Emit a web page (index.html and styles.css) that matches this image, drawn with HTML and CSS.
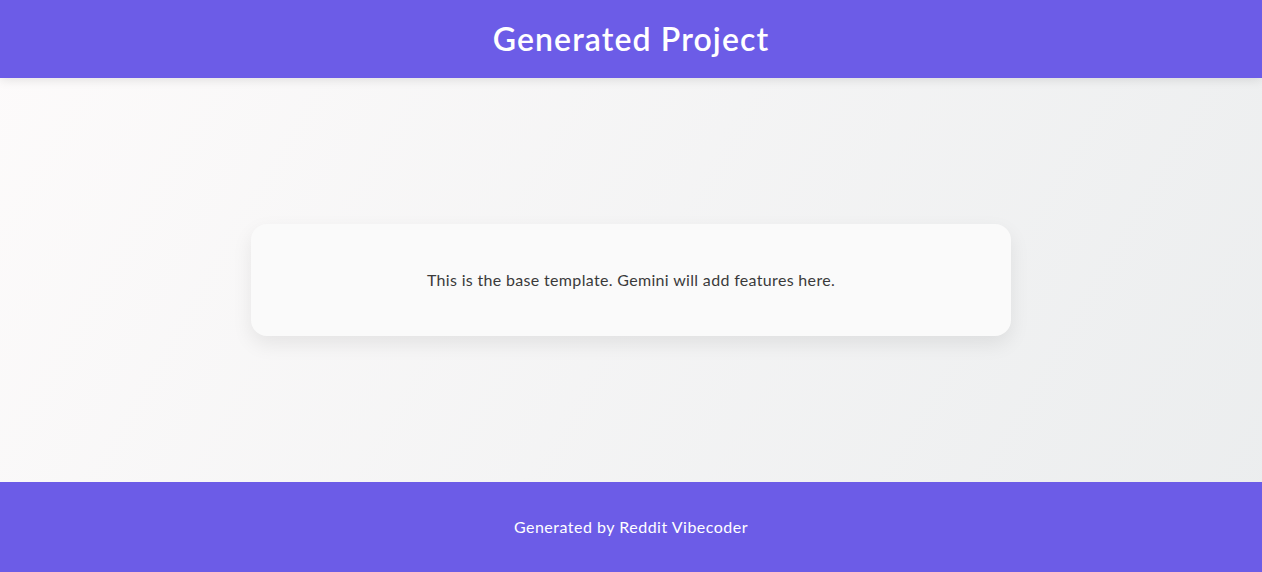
FILE: index.html
```html
<!DOCTYPE html>
<html lang="en">
<head>
<meta charset="utf-8">
<title>Generated Project</title>
<link rel="stylesheet" href="styles.css">
</head>
<body>
<header class="site-header">
  <h1 class="site-title">Generated Project</h1>
</header>
<main class="main">
  <section class="card">
    <p class="card-text">This is the base template. Gemini will add features here.</p>
  </section>
</main>
<footer class="site-footer">
  <p class="footer-text">Generated by Reddit Vibecoder</p>
</footer>
</body>
</html>
```

FILE: styles.css
```css
* { box-sizing: border-box; }
html, body { height: 100%; }
body {
  margin: 0;
  min-height: 100vh;
  display: flex;
  flex-direction: column;
  font-family: "Lato", "Noto Sans", sans-serif;
  color: #333;
  background: linear-gradient(120deg, #fdfbfb 0%, #ebedee 100%);
}
.site-header {
  height: 78px;
  background: #6c5ce7;
  color: #fff;
  display: flex;
  align-items: center;
  justify-content: center;
  box-shadow: 0 2px 10px rgba(0,0,0,0.1);
  position: relative;
  z-index: 1;
}
.site-title {
  margin: 0;
  font-size: 32px;
  font-weight: 600;
  letter-spacing: 1.1px;
  line-height: 1;
}
.main {
  flex: 1;
  display: flex;
  align-items: center;
  justify-content: center;
}
.card {
  width: 760px;
  height: 112px;
  background: #fafafa;
  border-radius: 16px;
  box-shadow: 0 8px 20px rgba(0,0,0,0.08);
  display: flex;
  align-items: center;
  justify-content: center;
}
.card-text {
  margin: 0 0 2px;
  font-size: 16px;
  letter-spacing: 0.33px;
  color: #3a3a3a;
}
.site-footer {
  height: 90px;
  background: #6c5ce7;
  color: #fff;
  display: flex;
  align-items: center;
  justify-content: center;
}
.footer-text {
  margin: 0 0 2px;
  font-size: 16px;
  letter-spacing: 0.5px;
}
```
